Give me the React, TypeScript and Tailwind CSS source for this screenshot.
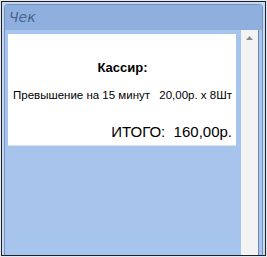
export default function App() {
  return (
    <div className="w-[267px] h-[257px] bg-[#e4e9f1] p-px" style={{ fontFamily: '"Liberation Sans", Arial, sans-serif' }}>
      <div className="h-full border border-[#1f2229] bg-[#c8d8ef] p-[2px] pb-0 flex flex-col">
        <div className="flex-1 flex flex-col rounded-t-[4px] border border-b-0 border-[#7493c3] overflow-hidden">
          <div className="h-[25px] shrink-0 bg-[#8fb0de] pl-[4px] flex items-center">
            <span className="italic text-[14px] text-[#4b6390]" style={{ fontFamily: '"DejaVu Sans", sans-serif' }}>
              Чек
            </span>
          </div>
          <div className="flex-1 flex bg-[#a6c4ec] pr-[3px]">
            <div className="flex-1 pl-[3px] pr-[5px] pt-[4px]">
              <div className="h-[112px] bg-white border-b border-[#d7e3f3] flex flex-col pl-[5px] pr-[4px] pt-[26px]">
                <div className="text-center font-bold text-[13px] leading-[16px] text-black">Кассир:</div>
                <div className="mt-[12px] flex justify-between text-[11.5px] leading-[14px] text-black">
                  <span>Превышение на 15 минут</span>
                  <span>20,00р. х 8Шт</span>
                </div>
                <div className="mt-[20px] text-right text-[15px] leading-[19px] text-black whitespace-pre">ИТОГО:  160,00р.</div>
              </div>
            </div>
            <div className="w-[18px] bg-[#f3f3f3] border-r border-[#6a85b4] flex justify-center pt-[6px]">
              <svg width="7" height="4" viewBox="0 0 7 4">
                <path d="M3.5 0 L7 4 L0 4 Z" fill="#8c8c8c" />
              </svg>
            </div>
          </div>
        </div>
      </div>
    </div>
  )
}
